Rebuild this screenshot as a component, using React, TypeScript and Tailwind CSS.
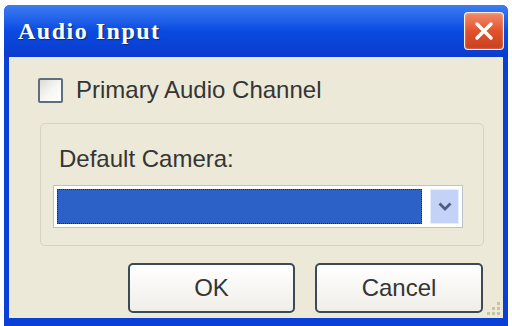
import React from 'react';

const CloseButton: React.FC = () => (
  <button className="w-[40px] h-[38px] rounded-[4px] border border-white/90 bg-gradient-to-b from-[#f08a6a] via-[#e2512c] to-[#c8401f] flex items-center justify-center shadow-[inset_0_0_2px_rgba(255,255,255,0.6)]">
    <svg width="24" height="24" viewBox="0 0 24 24">
      <path d="M5 5L19 19M19 5L5 19" stroke="#ffffff" strokeWidth="3.5" strokeLinecap="round" />
    </svg>
  </button>
);

const ResizeGrip: React.FC = () => (
  <svg width="20" height="18" viewBox="0 0 20 18" className="absolute right-[1px] bottom-[1px]">
    {[[15, 3], [10, 8], [15, 8], [5, 13], [10, 13], [15, 13]].map(([x, y], i) => (
      <rect key={i} x={x} y={y} width="3" height="3" fill="#c9c3a6" />
    ))}
  </svg>
);

const App: React.FC = () => {
  return (
    <div className="w-[512px] h-[326px] bg-white pt-[5px] px-[4px] overflow-hidden font-['Liberation_Sans',Arial,sans-serif]">
      <div className="h-[321px] flex flex-col rounded-t-[6px] bg-[#0a40d8]">
        {/* title bar */}
        <div className="h-[52px] flex items-center justify-between pl-[14px] pr-[4px] rounded-t-[6px] bg-gradient-to-b from-[#3d7cf2] via-[#0a4ae2] to-[#0a3ccd]">
          <span className="text-white font-bold text-[24px] tracking-[1.5px] font-['Liberation_Serif',serif] [text-shadow:1px_1px_1px_#0a2a80]">
            Audio Input
          </span>
          <CloseButton />
        </div>

        {/* body */}
        <div className="flex-1 mx-[5px] mb-[8px] bg-[#ece9d8] flex flex-col relative text-[#353535] text-[24px]">
          <div className="flex items-center gap-[13px] pl-[29px] pt-[19px]">
            <div className="w-[25px] h-[25px] border-2 border-[#5f6d7c] rounded-[2px] bg-gradient-to-br from-[#dcdcd6] via-[#f5f5f3] to-white" />
            <span className="leading-[28px]">Primary Audio Channel</span>
          </div>

          <div className="ml-[31px] mr-[19px] mt-[19px] h-[123px] border border-[#d6d3c2] rounded-[5px] pl-[12px] pr-[20px] pt-[21px]">
            <div className="pl-[6px] leading-[28px]">Default Camera:</div>
            <div className="mt-[12px] h-[43px] border border-[#b9c3cf] bg-white flex items-center p-[3px] gap-[8px]">
              <div className="flex-1 h-full bg-[#2c62c8] border border-dotted border-[#1d2a4a]" />
              <div className="w-[29px] h-full bg-[#c3d3f7] border border-[#e6edfc] flex items-center justify-center">
                <svg width="16" height="11" viewBox="0 0 16 11">
                  <path d="M2.5 2.5L8 8L13.5 2.5" stroke="#4b5e86" strokeWidth="2.8" fill="none" />
                </svg>
              </div>
            </div>
          </div>

          <div className="flex justify-end gap-[20px] pr-[20px] mt-[17px]">
            <button className="w-[167px] h-[50px] rounded-[5px] border-2 border-[#3c4a55] bg-gradient-to-b from-white to-[#efeee8] text-[24px] text-[#353535]">
              OK
            </button>
            <button className="w-[168px] h-[50px] rounded-[5px] border-2 border-[#3c4a55] bg-gradient-to-b from-white to-[#efeee8] text-[24px] text-[#353535]">
              Cancel
            </button>
          </div>
          <ResizeGrip />
        </div>
      </div>
    </div>
  );
};

export default App;
